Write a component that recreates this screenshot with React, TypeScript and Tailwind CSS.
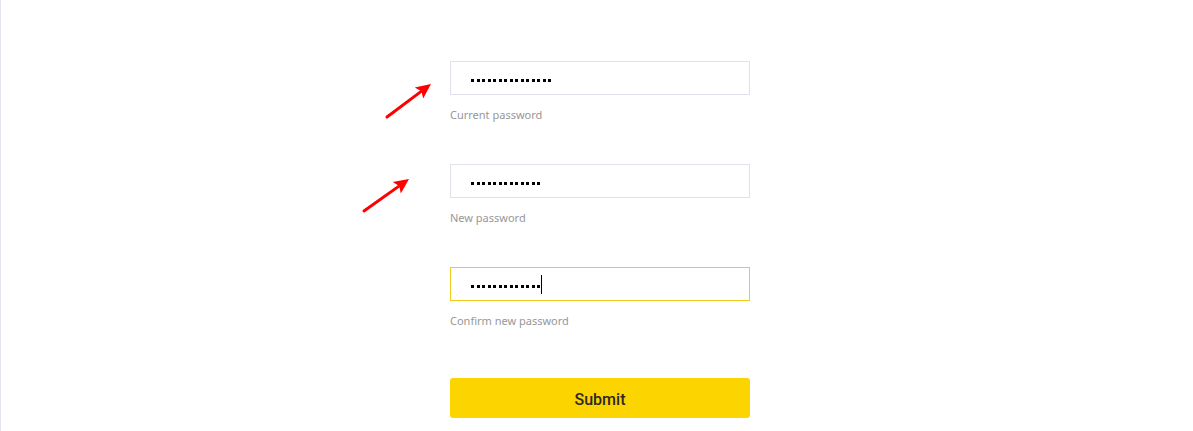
import React from "react";

function Dots({ n, caret }: { n: number; caret?: boolean }) {
  return (
    <div className="flex items-center h-full pl-[20px] pt-[4px]">
      <div className="flex gap-[2.5px]">
        {Array.from({ length: n }).map((_, i) => (
          <div key={i} className="w-[3px] h-[3px] bg-black" />
        ))}
      </div>
      {caret && <div className="ml-[1px] -mt-[4px] w-[1px] h-[19px] bg-black" />}
    </div>
  );
}

function Field({ n, label, focused, caret }: { n: number; label: string; focused?: boolean; caret?: boolean }) {
  return (
    <div className="flex flex-col">
      <div
        className={
          "h-[34px] w-[300px] bg-white border " +
          (focused ? "border-[#f0cb1c]" : "border-[#e1e1ee]")
        }
      >
        <Dots n={n} caret={caret} />
      </div>
      <div className="mt-[12px] h-[16px] leading-[16px] text-[11px] text-[#979797] font-['Noto_Sans',sans-serif]">
        {label}
      </div>
    </div>
  );
}

function Arrow({ x1, y1, x2, y2 }: { x1: number; y1: number; x2: number; y2: number }) {
  const dx = x2 - x1;
  const dy = y2 - y1;
  const len = Math.sqrt(dx * dx + dy * dy);
  const ux = dx / len;
  const uy = dy / len;
  const hl = 15;
  const hw = 7;
  const bx = x2 - ux * hl;
  const by = y2 - uy * hl;
  const px = -uy;
  const py = ux;
  const pts = `${x2},${y2} ${bx + px * hw},${by + py * hw} ${bx + ux * 3},${by + uy * 3} ${bx - px * hw},${by - py * hw}`;
  return (
    <>
      <line x1={x1} y1={y1} x2={bx + ux * 4} y2={by + uy * 4} stroke="#ff0000" strokeWidth={3} strokeLinecap="round" />
      <polygon points={pts} fill="#ff0000" />
    </>
  );
}

export default function App() {
  return (
    <div className="relative w-[1193px] h-[431px] bg-white border-l border-[#e4e4f2] overflow-hidden font-['Noto_Sans',sans-serif]">
      <div className="pl-[449px] pt-[61px] flex flex-col">
        <Field n={15} label="Current password" />
        <div className="h-[41px]" />
        <Field n={13} label="New password" />
        <div className="h-[41px]" />
        <Field n={13} label="Confirm new password" focused caret />
        <div className="h-[49px]" />
        <button className="w-[300px] h-[40px] pt-[3px] rounded-[3px] bg-[#fcd500] text-[16px] text-[#2a2a2a] font-medium font-['Roboto',sans-serif] flex items-center justify-center">
          Submit
        </button>
      </div>
      <svg className="absolute left-0 top-0 pointer-events-none" width={1193} height={431}>
        <Arrow x1={386} y1={117} x2={430} y2={84} />
        <Arrow x1={363} y1={211} x2={408} y2={179} />
      </svg>
    </div>
  );
}
